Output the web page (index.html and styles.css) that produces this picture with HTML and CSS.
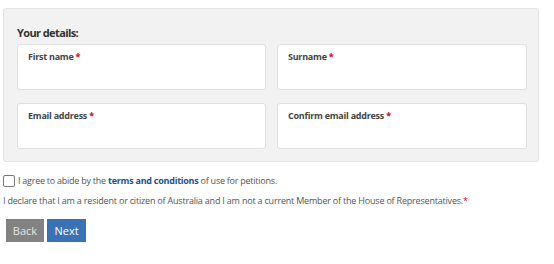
FILE: index.html
```html
<!DOCTYPE html>
<html>
<head>
<meta charset="utf-8">
<link rel="stylesheet" href="styles.css">
</head>
<body>
<form class="page">
  <div class="panel">
    <h2 class="panel-title">Your details:</h2>
    <div class="fields">
      <div class="field"><label>First name <span class="req">*</span></label><input type="text"></div>
      <div class="field"><label>Surname <span class="req">*</span></label><input type="text"></div>
      <div class="field"><label>Email address <span class="req">*</span></label><input type="text"></div>
      <div class="field"><label>Confirm email address <span class="req">*</span></label><input type="text"></div>
    </div>
  </div>
  <label class="agree"><span class="box"></span>I agree to abide by the&nbsp;<a class="link" href="#">terms and conditions</a>&nbsp;of use for petitions.</label>
  <p class="declare">I declare that I am a resident or citizen of Australia and I am not a current Member of the House of Representatives.<span class="req">*</span></p>
  <div class="actions">
    <button type="button" class="btn btn-back">Back</button>
    <button type="button" class="btn btn-next">Next</button>
  </div>
</form>
</body>
</html>
```
FILE: styles.css
```css
* { box-sizing: border-box; }
html, body { margin: 0; padding: 0; background: #fff; }
body {
  font-family: "Open Sans", "Liberation Sans", sans-serif;
  color: #555;
  width: 554px;
  height: 264px;
  overflow: hidden;
}
.page { padding: 8px 0 0 3px; }
.panel {
  width: 536px;
  height: 154px;
  background: #f2f2f2;
  border: 1px solid #e4e4e4;
  border-radius: 3px;
  padding: 16px 11px 0 13px;
}
.panel-title {
  margin: 0 0 3px 0;
  font-size: 11px;
  letter-spacing: -0.6px;
  line-height: 16px;
  font-weight: 700;
  color: #333;
}
.fields {
  display: grid;
  grid-template-columns: 249px 250px;
  column-gap: 11px;
  row-gap: 13px;
}
.field {
  height: 46px;
  background: #fff;
  border: 1px solid #e0e0e0;
  border-radius: 3px;
  padding: 5px 10px 0 10px;
  display: flex;
  flex-direction: column;
}
.field label {
  font-size: 9px;
  letter-spacing: -0.25px;
  line-height: 14px;
  font-weight: 700;
  color: #444;
}
.field input {
  border: 0;
  outline: 0;
  padding: 0;
  height: 20px;
  background: transparent;
}
.req { color: #d0021b; }
.agree {
  display: flex;
  align-items: center;
  margin-top: 12px;
  font-size: 9px;
  letter-spacing: -0.25px;
  line-height: 14px;
  color: #555;
}
.box {
  width: 12px;
  height: 12px;
  border: 1px solid #777;
  border-radius: 2px;
  background: #fff;
  margin-right: 3px;
  flex: none;
}
.link {
  color: #1c4f8f;
  font-weight: 700;
  text-decoration: none;
}
.declare {
  margin: 6px 0 0 0;
  font-size: 9px;
  letter-spacing: -0.2px;
  line-height: 14px;
  color: #555;
}
.actions {
  display: flex;
  gap: 3px;
  margin: 11px 0 0 3px;
}
.btn {
  height: 23px;
  border: 0;
  border-radius: 0;
  font-family: "Open Sans", "Liberation Sans", sans-serif;
  font-size: 11px;
  color: #e6e6e6;
  padding: 0;
}
.btn-back { background: #828282; width: 38px; }
.btn-next { background: #3a72b7; width: 39px; color: #fff; }
```
